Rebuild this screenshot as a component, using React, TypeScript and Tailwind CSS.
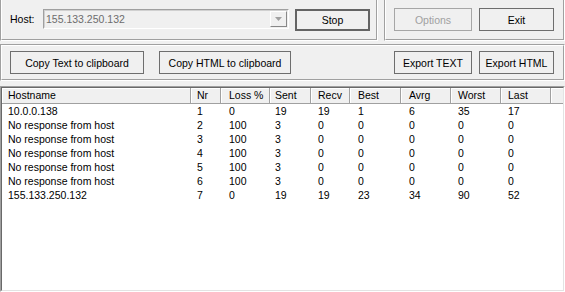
import React from "react";

const cols = [
  { c: "w-[189px] pl-[6px]", label: "Hostname" },
  { c: "w-[30px] pl-[6px]", label: "Nr" },
  { c: "w-[49px] pl-[8px]", label: "Loss %" },
  { c: "w-[41px] pl-[5px]", label: "Sent" },
  { c: "w-[39px] pl-[7px]", label: "Recv" },
  { c: "w-[51px] pl-[8px]", label: "Best" },
  { c: "w-[50px] pl-[8px]", label: "Avrg" },
  { c: "w-[50px] pl-[7px]", label: "Worst" },
  { c: "w-[50px] pl-[7px]", label: "Last" },
];

const rows = [
  ["10.0.0.138", "1", "0", "19", "19", "1", "6", "35", "17"],
  ["No response from host", "2", "100", "3", "0", "0", "0", "0", "0"],
  ["No response from host", "3", "100", "3", "0", "0", "0", "0", "0"],
  ["No response from host", "4", "100", "3", "0", "0", "0", "0", "0"],
  ["No response from host", "5", "100", "3", "0", "0", "0", "0", "0"],
  ["No response from host", "6", "100", "3", "0", "0", "0", "0", "0"],
  ["155.133.250.132", "7", "0", "19", "19", "23", "34", "90", "52"],
];

function Btn({
  className,
  children,
  disabled,
  def,
}: {
  className: string;
  children: React.ReactNode;
  disabled?: boolean;
  def?: boolean;
}) {
  const border = def
    ? "border-2 border-[#646464]"
    : disabled
    ? "border border-[#a6a6a6]"
    : "border border-[#6e6e6e]";
  return (
    <div
      className={`${className} ${border} bg-[#f0f0f0] flex items-center justify-center shrink-0 whitespace-nowrap ${
        disabled ? "text-[#a0a0a0]" : "text-black"
      }`}
    >
      {children}
    </div>
  );
}

function Group({
  className,
  top,
  children,
}: {
  className: string;
  top?: boolean;
  children: React.ReactNode;
}) {
  return (
    <div
      className={`${className} flex border-l border-l-[#a0a0a0] border-r border-r-white border-b border-b-white ${
        top ? "border-t border-t-[#a0a0a0]" : ""
      }`}
    >
      <div
        className={`flex-1 flex border-l border-l-white border-r border-r-[#a0a0a0] border-b border-b-[#a0a0a0] ${
          top ? "border-t border-t-white" : ""
        }`}
      >
        {children}
      </div>
    </div>
  );
}

export default function App() {
  return (
    <div className="w-[565px] h-[292px] bg-[#f0f0f0] overflow-hidden flex flex-col text-[10.5px] leading-[14px] text-black font-['Liberation_Sans',Arial,sans-serif]">
      {/* top row */}
      <div className="flex h-[41px] shrink-0">
        <Group className="w-[378px]">
          <div className="flex items-start pt-[9px] pl-[8px]">
            <span className="w-[33px] h-[20px] leading-[20px]">Host:</span>
            <div className="w-[246px] h-[20px] flex border border-t-[#a0a0a0] border-l-[#a0a0a0] border-r-white border-b-white">
              <div className="flex-1 flex items-center bg-[#f0f0f0] border border-t-[#d0d0d0] border-l-[#d0d0d0] border-r-[#f0f0f0] border-b-[#f0f0f0]">
                <span className="flex-1 pl-[1px] text-[#6d6d6d]">155.133.250.132</span>
                <div className="w-[17px] h-[16px] flex items-center justify-center border border-t-white border-l-white border-r-[#888888] border-b-[#888888] bg-[#f0f0f0]">
                  <svg width="7" height="4" viewBox="0 0 7 4">
                    <path d="M0 0H7L3.5 4Z" fill="#a0a0a0" />
                  </svg>
                </div>
              </div>
            </div>
            <Btn className="ml-[6px] w-[75px] h-[22px]" def>
              Stop
            </Btn>
          </div>
        </Group>
        <div className="w-[6px] shrink-0" />
        <Group className="flex-1">
          <div className="flex items-start pt-[8px] pl-[8px] gap-[7px]">
            <Btn className="w-[78px] h-[23px]" disabled>
              Options
            </Btn>
            <Btn className="w-[75px] h-[23px]">Exit</Btn>
          </div>
        </Group>
      </div>

      {/* second row */}
      <Group className="mt-[3px] h-[37px] shrink-0" top>
        <div className="flex-1 flex items-start pt-[5px] pl-[8px] pr-[9px]">
          <Btn className="w-[134px] h-[23px]">Copy Text to clipboard</Btn>
          <Btn className="ml-[15px] w-[132px] h-[23px]">Copy HTML to clipboard</Btn>
          <div className="flex-1" />
          <Btn className="w-[78px] h-[23px]">Export TEXT</Btn>
          <Btn className="ml-[7px] w-[75px] h-[23px]">Export HTML</Btn>
        </div>
      </Group>

      {/* list */}
      <div className="mt-[5px] flex-1 flex border border-t-[#a0a0a0] border-l-[#a0a0a0] border-r-white border-b-white">
        <div className="flex-1 flex flex-col bg-white border border-t-[#696969] border-l-[#696969] border-r-[#e3e3e3] border-b-[#e3e3e3]">
          <div className="flex h-[16px] shrink-0 bg-[#f0f0f0]">
            {cols.map((col) => (
              <div
                key={col.label}
                className={`${col.c} shrink-0 h-[16px] leading-[15px] border-r border-r-[#a0a0a0] border-b border-b-[#a0a0a0] shadow-[inset_1px_1px_0_#ffffff]`}
              >
                {col.label}
              </div>
            ))}
            <div className="flex-1 h-[16px] border-b border-b-[#a0a0a0] shadow-[inset_1px_1px_0_#ffffff]" />
          </div>
          {rows.map((r, i) => (
            <div key={i} className="flex h-[14px] shrink-0">
              {r.map((v, j) => (
                <div key={j} className={`${cols[j].c} shrink-0 h-[14px] leading-[14px] whitespace-nowrap`}>
                  {v}
                </div>
              ))}
            </div>
          ))}
        </div>
      </div>
    </div>
  );
}
